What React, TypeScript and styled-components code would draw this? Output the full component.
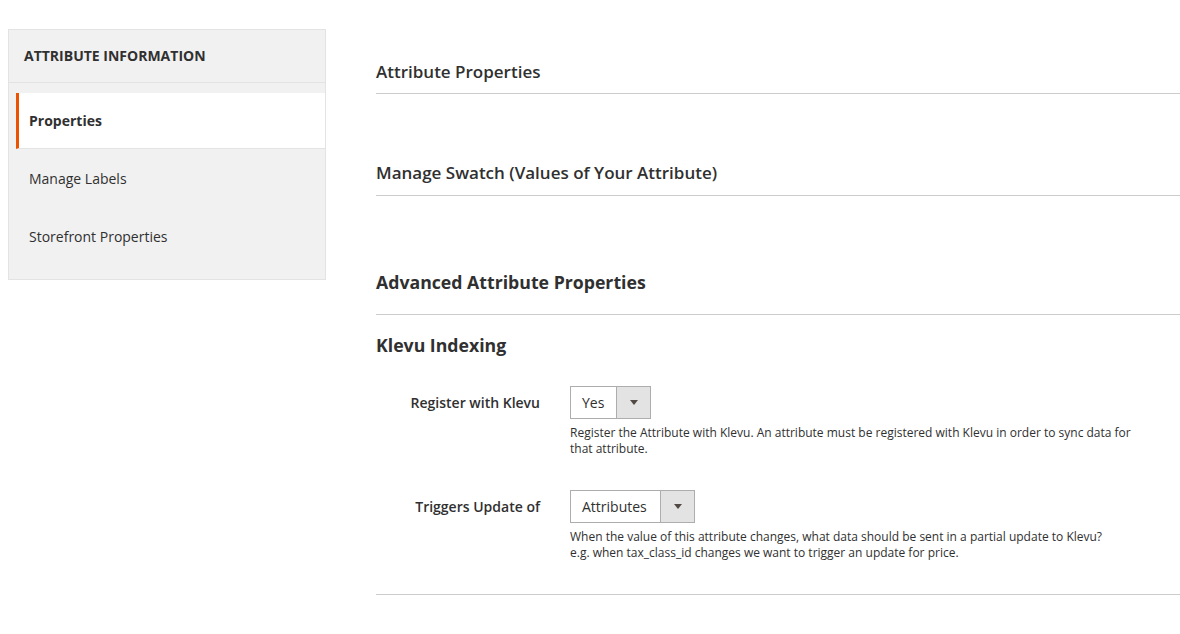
import React from "react";
import styled, { createGlobalStyle } from "styled-components";

const Global = createGlobalStyle`
  html, body { margin: 0; padding: 0; background: #fff; }
  body { font-family: "Open Sans", "Liberation Sans", sans-serif; color: #303030; }
  * { box-sizing: border-box; }
`;

const Page = styled.div`
  display: flex;
  align-items: flex-start;
  padding: 29px 0 0 8px;
  gap: 50px;
  width: 1180px;
`;

const Sidebar = styled.nav`
  width: 318px;
  flex: none;
  background: #f1f1f1;
  border: 1px solid #e3e3e3;
  padding-bottom: 14px;
`;

const SideTitle = styled.div`
  font-size: 14px;
  font-weight: 700;
  line-height: 20px;
  text-transform: uppercase;
  color: #303030;
  padding: 16px 15px 16px 15px;
  border-bottom: 1px solid #e3e3e3;
  margin-bottom: 10px;
`;

const NavItem = styled.div<{ $active?: boolean }>`
  margin-left: 7px;
  height: ${(p) => (p.$active ? "56px" : "58px")};
  display: flex;
  align-items: center;
  padding-left: 10px;
  border-left: 3px solid ${(p) => (p.$active ? "#eb5202" : "transparent")};
  background: ${(p) => (p.$active ? "#fff" : "transparent")};
  border-bottom: ${(p) => (p.$active ? "1px solid #e3e3e3" : "none")};
  font-size: 14px;
  font-weight: ${(p) => (p.$active ? 700 : 400)};
  color: #303030;
`;

const Main = styled.main`
  flex: 1;
  padding-top: 32px;
`;

const SectionHead = styled.div<{ $mt: number; $pb: number; $bold?: boolean }>`
  margin-top: ${(p) => p.$mt}px;
  padding-bottom: ${(p) => p.$pb}px;
  border-bottom: 1px solid #cccccc;
  font-size: ${(p) => (p.$bold ? "17.7px" : "17px")};
  line-height: 22px;
  font-weight: ${(p) => (p.$bold ? 700 : 600)};
  color: #303030;
`;

const SubTitle = styled.div`
  margin-top: 19px;
  font-size: 17.7px;
  line-height: 22px;
  font-weight: 700;
  color: #303030;
`;

const Fieldset = styled.div`
  padding-top: 30px;
  padding-bottom: 33px;
  border-bottom: 1px solid #cccccc;
  display: flex;
  flex-direction: column;
  gap: 33px;
`;

const Field = styled.div`
  display: grid;
  grid-template-columns: 164px 1fr;
  column-gap: 30px;
`;

const Label = styled.label`
  font-size: 14px;
  font-weight: 600;
  line-height: 33px;
  text-align: right;
  color: #303030;
`;

const Control = styled.div`
  display: flex;
  flex-direction: column;
  align-items: flex-start;
`;

const Select = styled.div`
  display: flex;
  height: 33px;
  border: 1px solid #adadad;
  background: #fff;
`;

const SelectValue = styled.span<{ $w: number }>`
  width: ${(p) => p.$w}px;
  padding-left: 11px;
  font-size: 14px;
  line-height: 31px;
  color: #303030;
`;

const SelectArrow = styled.span`
  width: 34px;
  background: #e3e3e3;
  border-left: 1px solid #adadad;
  display: flex;
  align-items: center;
  justify-content: center;
  &::after {
    content: "";
    border-left: 4px solid transparent;
    border-right: 4px solid transparent;
    border-top: 5px solid #514943;
  }
`;

const Note = styled.div`
  margin-top: 6px;
  font-size: 12px;
  line-height: 16px;
  color: #303030;
  max-width: 570px;
`;

export default function App() {
  return (
    <>
      <Global />
      <Page>
        <Sidebar>
          <SideTitle>Attribute Information</SideTitle>
          <NavItem $active>Properties</NavItem>
          <NavItem>Manage Labels</NavItem>
          <NavItem>Storefront Properties</NavItem>
        </Sidebar>
        <Main>
          <SectionHead $mt={0} $pb={10}>Attribute Properties</SectionHead>
          <SectionHead $mt={68} $pb={11}>Manage Swatch (Values of Your Attribute)</SectionHead>
          <SectionHead $mt={75} $pb={21} $bold>Advanced Attribute Properties</SectionHead>
          <SubTitle>Klevu Indexing</SubTitle>
          <Fieldset>
            <Field>
              <Label>Register with Klevu</Label>
              <Control>
                <Select>
                  <SelectValue $w={45}>Yes</SelectValue>
                  <SelectArrow />
                </Select>
                <Note>
                  Register the Attribute with Klevu. An attribute must be registered with Klevu in order to sync data for that attribute.
                </Note>
              </Control>
            </Field>
            <Field>
              <Label>Triggers Update of</Label>
              <Control>
                <Select>
                  <SelectValue $w={89}>Attributes</SelectValue>
                  <SelectArrow />
                </Select>
                <Note>
                  When the value of this attribute changes, what data should be sent in a partial update to Klevu?
                  <br />
                  e.g. when tax_class_id changes we want to trigger an update for price.
                </Note>
              </Control>
            </Field>
          </Fieldset>
        </Main>
      </Page>
    </>
  );
}
